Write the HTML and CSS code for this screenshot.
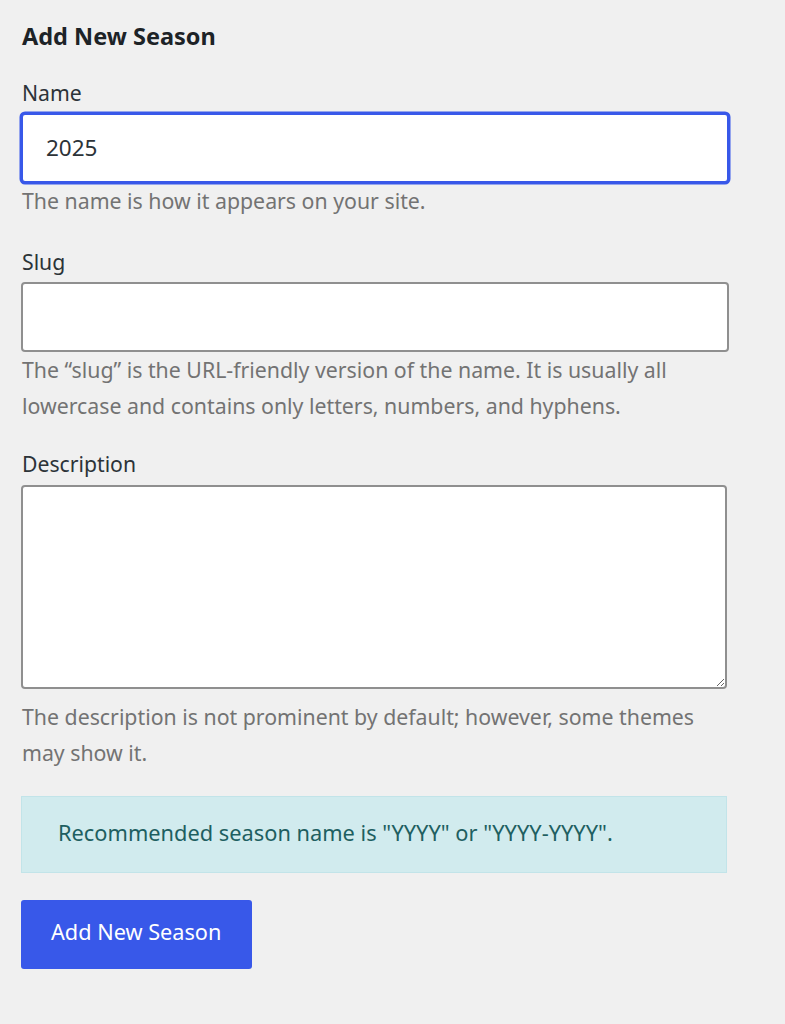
FILE: index.html
```html
<!DOCTYPE html>
<html lang="en">
<head>
<meta charset="utf-8">
<title>Add New Season</title>
<link rel="stylesheet" href="styles.css">
</head>
<body>
<form class="form-wrap">
  <h2 class="title">Add New Season</h2>
  <div class="field">
    <label class="label" for="tag-name">Name</label>
    <input class="input is-focused" id="tag-name" type="text" value="2025">
    <p class="help">The name is how it appears on your site.</p>
  </div>
  <div class="field field-slug">
    <label class="label" for="tag-slug">Slug</label>
    <input class="input" id="tag-slug" type="text" value="">
    <p class="help">The “slug” is the URL-friendly version of the name. It is usually all lowercase and contains only letters, numbers, and hyphens.</p>
  </div>
  <div class="field field-desc">
    <label class="label label-desc" for="tag-description">Description</label>
    <textarea class="textarea" id="tag-description"></textarea>
    <p class="help help-desc">The description is not prominent by default; however, some themes may show it.</p>
  </div>
  <div class="notice">Recommended season name is "YYYY" or "YYYY-YYYY".</div>
  <button class="button" type="button">Add New Season</button>
</form>
</body>
</html>
```
FILE: styles.css
```css
* { box-sizing: border-box; }
html, body { margin: 0; padding: 0; }
body {
  background: #f0f0f0;
  font-family: "Noto Sans", "Open Sans", sans-serif;
  color: #2c3338;
  width: 785px;
  height: 1024px;
  overflow: hidden;
}
.form-wrap {
  padding: 18px 56px 0 21px;
}
.title {
  margin: 0 0 24px 1px;
  font-size: 23.5px;
  line-height: 36px;
  font-weight: 700;
  color: #1d2327;
}
.field { margin-bottom: 28px; }
.field-slug { margin-bottom: 25px; }
.field-desc { margin-bottom: 25px; }
.label {
  display: block;
  margin: 0 0 5px 1px;
  font-size: 21.2px;
  line-height: 30px;
  color: #2c3338;
}
.label-desc { margin-bottom: 6px; }
.input {
  display: block;
  width: 100%;
  height: 70px;
  margin: 0;
  padding: 0 23px 2px;
  background: #fff;
  border: 2px solid #8f8f8f;
  border-radius: 4px;
  font-family: inherit;
  font-size: 22.5px;
  color: #2c3338;
  outline: none;
}
.input.is-focused {
  border-color: #3858e9;
  box-shadow: 0 0 0 1.5px #3858e9;
}
.textarea {
  display: block;
  width: 706px;
  height: 204px;
  margin: 0;
  padding: 10px;
  background: #fff;
  border: 2px solid #8f8f8f;
  border-radius: 4px;
  font-family: inherit;
  font-size: 20px;
  resize: vertical;
}
.help {
  margin: 0 0 0 1px;
  font-size: 21.3px;
  line-height: 36px;
  color: #737373;
}
.help-desc { margin-top: 10px; }
.notice {
  width: 706px;
  height: 77px;
  display: flex;
  align-items: center;
  padding: 0 36px 4px;
  background: #d1ebee;
  border: 1px solid #c2e4e9;
  font-size: 21.8px;
  color: #1e5f61;
  margin-bottom: 27px;
}
.button {
  display: block;
  width: 231px;
  height: 69px;
  padding: 0 30px 6px;
  background: #3858e9;
  border: none;
  border-radius: 3px;
  color: #fff;
  font-family: inherit;
  font-size: 21.7px;
  text-align: left;
}
```
